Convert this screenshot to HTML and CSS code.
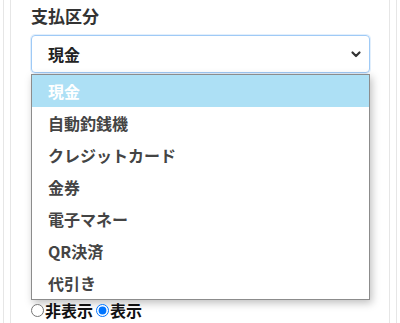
FILE: index.html
```html
<!DOCTYPE html>
<html lang="ja">

<head>
    <meta charset="UTF-8">
    <meta name="viewport" content="width=device-width, initial-scale=1.0">
    <title>支払区分</title>
    <link rel="stylesheet" href="styles.css">
</head>

<body>
    <div id="page">
        <div id="card">
            <div class="label">支払区分</div>

            <div class="select">
                <span class="selected">現金</span>
                <svg class="chevron" width="12" height="8" viewBox="0 0 12 8">
                    <path d="M2.5 2.5 L6 6 L9.5 2.5" fill="none" stroke="#333" stroke-width="2.2" stroke-linecap="round" stroke-linejoin="round" />
                </svg>
            </div>

            <div class="options">
                <div class="option active">現金</div>
                <div class="option">自動釣銭機</div>
                <div class="option">クレジットカード</div>
                <div class="option">金券</div>
                <div class="option">電子マネー</div>
                <div class="option">QR決済</div>
                <div class="option">代引き</div>
            </div>

            <div class="radios">
                <label><input type="radio" name="disp">非表示</label>
                <label><input type="radio" name="disp" checked>表示</label>
            </div>
        </div>
    </div>
</body>

</html>
```

FILE: styles.css
```css
body {
    margin: 0;
    font-family: "Noto Sans CJK JP", "Noto Sans", sans-serif;
    background: #fff;
    overflow: hidden;
}

#page {
    margin: 0 3px;
    padding: 0 6px;
    border-left: 1px solid #e6e6e6;
    border-right: 1px solid #e6e6e6;
    height: 323px;
}

#card {
    border-left: 1px solid #e6e6e6;
    border-right: 1px solid #e6e6e6;
    padding: 4px 19px 0 20px;
    height: 319px;
}

.label {
    font-size: 17px;
    font-weight: bold;
    color: #333;
    line-height: 24px;
    margin-bottom: 7px;
}

.select {
    height: 36px;
    border: 1px solid #9fcaf6;
    border-radius: 4px;
    display: flex;
    align-items: center;
    justify-content: space-between;
    padding: 0 7px 0 16px;
    box-shadow: 0 0 0 1px rgba(158, 202, 245, 0.3);
}

.selected {
    font-size: 16px;
    font-weight: bold;
    color: #222;
}

.chevron {
    display: block;
}

.options {
    margin-top: 1px;
    border: 1px solid #8c8c8c;
    box-shadow: 2px 3px 8px rgba(0, 0, 0, 0.25);
    background: #fff;
}

.option {
    height: 32px;
    line-height: 32px;
    padding-left: 16px;
    font-size: 16px;
    font-weight: bold;
    color: #444;
}

.option.active {
    background-color: #ade0f5;
    color: #fff;
}

.radios {
    display: flex;
    align-items: center;
    font-size: 16px;
    font-weight: bold;
    color: #111;
    line-height: 20px;
}

.radios label {
    display: flex;
    align-items: center;
    margin-right: 3px;
}

.radios input {
    margin: 0 1px 0 0;
    width: 13px;
    height: 13px;
}
```
